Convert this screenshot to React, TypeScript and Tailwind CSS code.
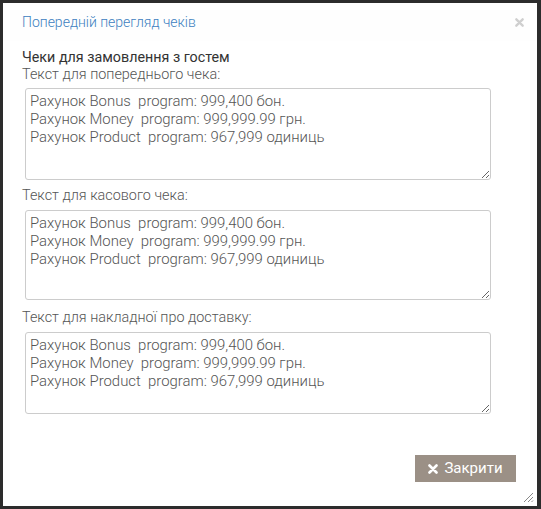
import React from "react";

const TEXT = "Рахунок Bonus  program: 999,400 бон.\nРахунок Money  program: 999,999.99 грн.\nРахунок Product  program: 967,999 одиниць";

function Times({ className, color }: { className?: string; color: string }) {
  return (
    <svg className={className} viewBox="0 0 10 10" fill="none">
      <path d="M1.5 1.5 L8.5 8.5 M8.5 1.5 L1.5 8.5" stroke={color} strokeWidth="2.6" strokeLinecap="round" />
    </svg>
  );
}

function Area({ h }: { h: string }) {
  return (
    <textarea
      defaultValue={TEXT}
      className={`ml-[3px] w-[466px] ${h} border border-[#cccccc] rounded-[3px] px-[4px] py-[3px] text-[14.9px] leading-[18px] text-[#555] font-light outline-none`}
      style={{ whiteSpace: "pre" }}
    />
  );
}

export default function App() {
  return (
    <div
      className="w-[541px] h-[509px] bg-[#2c2c2c] pt-[3px] pl-[3px]"
      style={{ fontFamily: "Roboto, 'Noto Sans', sans-serif" }}
    >
      <div className="relative w-[534px] h-[503px] bg-white flex flex-col">
        <div className="h-[38px] bg-[#fefefe] flex items-center justify-between pl-[19px] pr-[13px] pt-[1px]">
          <span className="text-[14px] text-[#3c80c0] font-light">Попередній перегляд чеків</span>
          <Times className="w-[9px] h-[9px]" color="#cfcfcf" />
        </div>
        <div className="flex flex-col pl-[19px] pt-[7px]">
          <div className="text-[14.3px] leading-[18px] text-[#333]">Чеки для замовлення з гостем</div>
          <div className="text-[14.4px] leading-[18px] text-[#555] font-light">Текст для попереднього чека:</div>
          <div className="mt-[4px] flex"><Area h="h-[92px]" /></div>
          <div className="mt-[7px] text-[14.4px] leading-[18px] text-[#555] font-light">Текст для касового чека:</div>
          <div className="mt-[5px] flex"><Area h="h-[90px]" /></div>
          <div className="mt-[9px] text-[14.4px] leading-[18px] text-[#555] font-light">Текст для накладної про доставку:</div>
          <div className="mt-[5px] flex"><Area h="h-[82px]" /></div>
        </div>
        <div className="flex justify-end pr-[21px] mt-[41px]">
          <button className="w-[101px] h-[27px] bg-[#9b9086] text-white text-[15px] flex items-center justify-center gap-[6px]">
            <Times className="w-[10px] h-[10px]" color="#ffffff" />
            <span>Закрити</span>
          </button>
        </div>
        <svg className="absolute right-[3px] bottom-[3px] w-[11px] h-[11px]" viewBox="0 0 11 11">
          <path d="M10 1 L1 10 M10 5 L5 10 M10 8.5 L8.5 10" stroke="#888" strokeWidth="1" />
        </svg>
      </div>
    </div>
  );
}
